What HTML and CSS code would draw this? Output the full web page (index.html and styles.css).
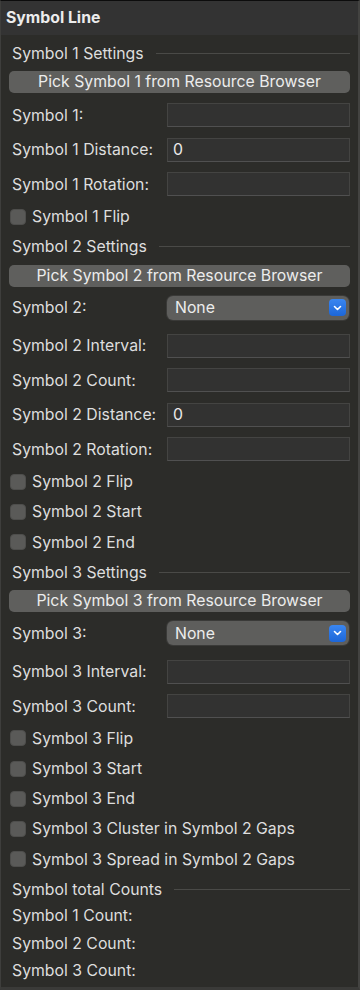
FILE: index.html
```html
<html>
<head>
    <meta charset="UTF-8">
    <title>Symbol Line</title>
    <link rel="stylesheet" href="styles.css">
</head>
<body>

<div class="panel">
    <div class="panel-head">Symbol Line</div>
    <div class="panel-body">

        <div class="group-title"><span>Symbol 1 Settings</span></div>
        <div class="pick">Pick Symbol 1 from Resource Browser</div>
        <div class="field"><label>Symbol 1:</label><div class="text"></div></div>
        <div class="field"><label>Symbol 1 Distance:</label><div class="text">0</div></div>
        <div class="field"><label>Symbol 1 Rotation:</label><div class="text"></div></div>
        <div class="check"><i></i>Symbol 1 Flip</div>

        <div class="group-title"><span>Symbol 2 Settings</span></div>
        <div class="pick">Pick Symbol 2 from Resource Browser</div>
        <div class="field sel-row"><label>Symbol 2:</label>
            <div class="select">None<b><svg width="9" height="6" viewBox="0 0 9 6"><path d="M1.5 1.5 L4.5 4.5 L7.5 1.5" fill="none" stroke="#fff" stroke-width="1.6" stroke-linecap="round" stroke-linejoin="round"/></svg></b></div>
        </div>
        <div class="field"><label>Symbol 2 Interval:</label><div class="text"></div></div>
        <div class="field"><label>Symbol 2 Count:</label><div class="text"></div></div>
        <div class="field"><label>Symbol 2 Distance:</label><div class="text">0</div></div>
        <div class="field"><label>Symbol 2 Rotation:</label><div class="text"></div></div>
        <div class="check"><i></i>Symbol 2 Flip</div>
        <div class="check"><i></i>Symbol 2 Start</div>
        <div class="check"><i></i>Symbol 2 End</div>

        <div class="group-title"><span>Symbol 3 Settings</span></div>
        <div class="pick">Pick Symbol 3 from Resource Browser</div>
        <div class="field sel-row"><label>Symbol 3:</label>
            <div class="select">None<b><svg width="9" height="6" viewBox="0 0 9 6"><path d="M1.5 1.5 L4.5 4.5 L7.5 1.5" fill="none" stroke="#fff" stroke-width="1.6" stroke-linecap="round" stroke-linejoin="round"/></svg></b></div>
        </div>
        <div class="field"><label>Symbol 3 Interval:</label><div class="text"></div></div>
        <div class="field"><label>Symbol 3 Count:</label><div class="text"></div></div>
        <div class="check"><i></i>Symbol 3 Flip</div>
        <div class="check"><i></i>Symbol 3 Start</div>
        <div class="check"><i></i>Symbol 3 End</div>
        <div class="check"><i></i>Symbol 3 Cluster in Symbol 2 Gaps</div>
        <div class="check"><i></i>Symbol 3 Spread in Symbol 2 Gaps</div>

        <div class="group-title"><span>Symbol total Counts</span></div>
        <div class="count">Symbol 1 Count:</div>
        <div class="count">Symbol 2 Count:</div>
        <div class="count">Symbol 3 Count:</div>
    </div>
</div>

</body>
</html>
```

FILE: styles.css
```css
*{ margin:0; padding:0; box-sizing:border-box;}
body{font:15.8px/19px Inter,"Noto Sans",Arial,sans-serif;background:#2c2c29;color:#dedede;}

.panel{width:360px;height:990px;border-top:1px solid #0c0c0c;border-left:1px solid #3e3e3c;border-right:2px solid #434341;border-bottom:3px solid #3a3a38;background:#2c2c29;}
.panel-head{height:34px;background:#333333;padding:7px 0 0 5px;font-weight:700;color:#ececec;}
.panel-body{padding:8px 8px 0 8px;}

/* group heading with rule */
.group-title{display:flex;align-items:center;height:20px;margin-top:5px;padding-left:3px;}
.group-title:first-child{margin-top:0;}
.group-title span{white-space:nowrap;}
.group-title:after{content:"";flex:1;height:1px;background:#4a4a47;margin:0 0 0 12px;}

.pick{height:22px;margin-top:8px;background:#5f5f5d;border-radius:5px;text-align:center;line-height:22px;color:#ececec;}

.field{display:flex;align-items:center;justify-content:space-between;height:34.5px;padding-left:3px;}
.pick + .field{margin-top:5px;}
.field .text{width:183px;height:24px;background:#323231;border:1px solid #444442;border-bottom-color:#505050;padding-left:5px;line-height:22px;color:#eaeaea;}
.sel-row{height:37px;padding-bottom:5px;}
.select{width:182px;height:24px;margin-right:1px;background:#5e5e5c;border-radius:6px;padding:0 3px 0 8px;display:flex;align-items:center;justify-content:space-between;color:#ececec;box-shadow:0 0 0 1px #3a3a38;}
.select b{width:17px;height:17px;border-radius:4px;background:linear-gradient(#3a86f0,#1c66d8);display:flex;align-items:center;justify-content:center;}

.check{display:flex;align-items:center;height:30.2px;padding-left:1px;}
.check i{width:16px;height:16px;border-radius:4px;background:#5a5a58;border:1px solid #4e4e4c;margin-right:6px;}

.count{height:27.5px;line-height:27.5px;padding-left:3px;}
.group-title + .count{margin-top:3px;}
```
